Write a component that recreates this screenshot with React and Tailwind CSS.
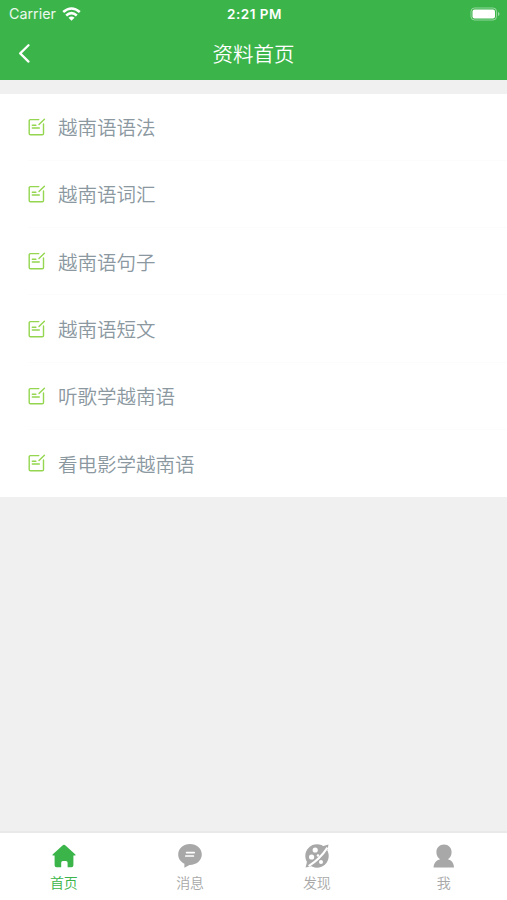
const materials = [
  '越南语语法',
  '越南语词汇',
  '越南语句子',
  '越南语短文',
  '听歌学越南语',
  '看电影学越南语'
];

const NoteIcon = () => (
  <svg
    className="w-[18px] h-[18px] shrink-0 text-[#94d64f]"
    viewBox="0 0 18 18"
    fill="none"
    stroke="currentColor"
    strokeWidth="1.4"
    strokeLinecap="round"
    strokeLinejoin="round"
  >
    <path d="M10.8 1.6H2.4Q1.2 1.6 1.2 2.8v12.8q0 1.2 1.2 1.2h11.9q1.2 0 1.2-1.2V6" />
    <path d="M16.4 1.200 11 6.600M4.300 7.300h3.600M4.300 10h7" />
  </svg>
);

const HomeIcon = () => (
  <svg className="w-6 h-6" viewBox="0 0 24 24" fill="currentColor">
    <path d="M12 .7q.8 0 1.500.7l9.900 9q.5.900-.3 1.100h-1.700v9.700q0 2-2 2h-3.800v-4.500q0-1.700-1.700-1.700h-3q-1.700 0-1.700 1.700v4.500H4.600q-2 0-2-2v-9.700H.9q-.8-.2-.3-1.100l9.900-9Q11.200.7 12 .7Z" />
  </svg>
);

const MessageIcon = () => (
  <svg className="w-6 h-6" viewBox="0 0 24 24" fill="currentColor">
    <path d="M12 0C5.400 0 .2 4.600.2 10.500c0 4.100 2.400 7.400 6.200 9.200v4.100l5.100-2.900C18.500 21 23.800 16.400 23.800 10.500S18.600 0 12 0Z" />
    <path d="M8.600 8.600h7.600M7.800 12h7.600" stroke="white" strokeWidth="1.700" strokeLinecap="round" />
  </svg>
);

const DiscoverIcon = () => (
  <svg className="w-6 h-6" viewBox="0 0 24 24" fill="currentColor">
    <circle cx="12" cy="12" r="11.700" />
    <path d="M18.500 2 23.500.6 22.500 5.500 5.500 22.500.6 23.400 1.800 18.500Z" />
    <path d="M22.400 3.600Q15.500 14.500 3.600 22.200" fill="none" stroke="white" strokeWidth="2" />
    <g fill="white">
      <circle cx="10.200" cy="6" r="2.600" />
      <circle cx="6.600" cy="13" r="2.600" />
      <circle cx="13" cy="11.500" r="1.300" />
      <circle cx="16" cy="18" r="2" />
    </g>
  </svg>
);

const ProfileIcon = () => (
  <svg className="w-6 h-6" viewBox="0 0 24 24" fill="currentColor">
    <path d="M12 .6c-4.400 0-7.600 3.200-7.600 7.700 0 3.200 1.500 5.500 3.700 6.900-3.500.9-6.500 3.900-6.500 8.400h20.400c0-4.500-2.600-7.500-6.100-8.400 2.200-1.400 3.700-3.700 3.700-6.900C19.600 3.800 16.400.6 12 .6Z" />
  </svg>
);

const tabs = [
  { label: '首页', Icon: HomeIcon, active: true },
  { label: '消息', Icon: MessageIcon },
  { label: '发现', Icon: DiscoverIcon },
  { label: '我', Icon: ProfileIcon }
];

const StatusBar = () => (
  <div className="h-[27px] grid grid-cols-3 items-center pl-[9px] pr-[7px] font-[Inter,sans-serif] font-normal">
    <div className="flex items-center gap-[6px]">
      <span className="text-[14.300px] text-white/90">Carrier</span>
      <svg className="w-[19px] h-[14px]" viewBox="0 0 19 14" fill="none" stroke="white" strokeWidth="2.600">
        <path d="M1.200 5.100Q9.500-2.100 17.800 5.100M4.200 8.400q5.300-4.400 10.600 0" />
        <path d="M6.500 10.700q3-2.300 6 0l-3 3.100Z" fill="white" stroke="none" />
      </svg>
    </div>
    <span className="pt-px text-center text-[13.500px] tracking-[0.500px] font-semibold">2:21 PM</span>
    <svg className="w-[30px] h-[14px] justify-self-end" viewBox="0 0 30 14" fill="none">
      <rect x="1" y="1" width="25.500" height="12" rx="3.500" stroke="white" strokeOpacity=".45" />
      <rect x="2.500" y="2.500" width="22.500" height="9" rx="2" fill="white" />
      <path d="M28 5v4q1.500-.5 1.500-2T28 5Z" fill="white" fillOpacity=".5" />
    </svg>
  </div>
);

const App = () => {
  return (
    <div className="h-screen flex flex-col overflow-hidden bg-[#f0f0f0] font-['Noto_Sans_CJK_SC',sans-serif] font-[350]">
      <header className="h-20 shrink-0 bg-[#3bb54a] text-white">
        <StatusBar />
        <div className="h-[53px] grid grid-cols-[60px_1fr_60px] items-center">
          <button aria-label="返回" className="pl-[18px]">
            <svg className="w-3 h-5" viewBox="0 0 12 20" fill="none" stroke="white" strokeWidth="2.200" strokeLinecap="round" strokeLinejoin="round">
              <path d="M10.500 1.200 2.200 9.400l8.300 8.200" />
            </svg>
          </button>
          <h1 className="text-center text-[20.500px] leading-none">资料首页</h1>
        </div>
      </header>

      <ul className="mt-[14px] h-[403px] shrink-0 grid grid-rows-6 bg-white">
        {materials.map(name => (
          <li key={name} className="group flex pl-7">
            <div className="flex-1 flex items-center gap-3 border-b border-[#fcfcfc] group-last:border-b-0">
              <NoteIcon />
              <span className="text-[19.500px] leading-none text-[#8b989f]">{name}</span>
            </div>
          </li>
        ))}
      </ul>

      <nav className="mt-auto h-[69px] shrink-0 grid grid-cols-4 border-t-2 border-[#e9e9e9] bg-white">
        {tabs.map(({ label, Icon, active }) => (
          <button
            key={label}
            className={`flex flex-col items-center pt-[11px] ${active ? 'pl-px text-[#3bb54a]' : 'text-[#a8a8a8]'}`}
          >
            <Icon />
            <span className="mt-[7px] text-[14px] leading-none">{label}</span>
          </button>
        ))}
      </nav>
    </div>
  );
};

export default App;
